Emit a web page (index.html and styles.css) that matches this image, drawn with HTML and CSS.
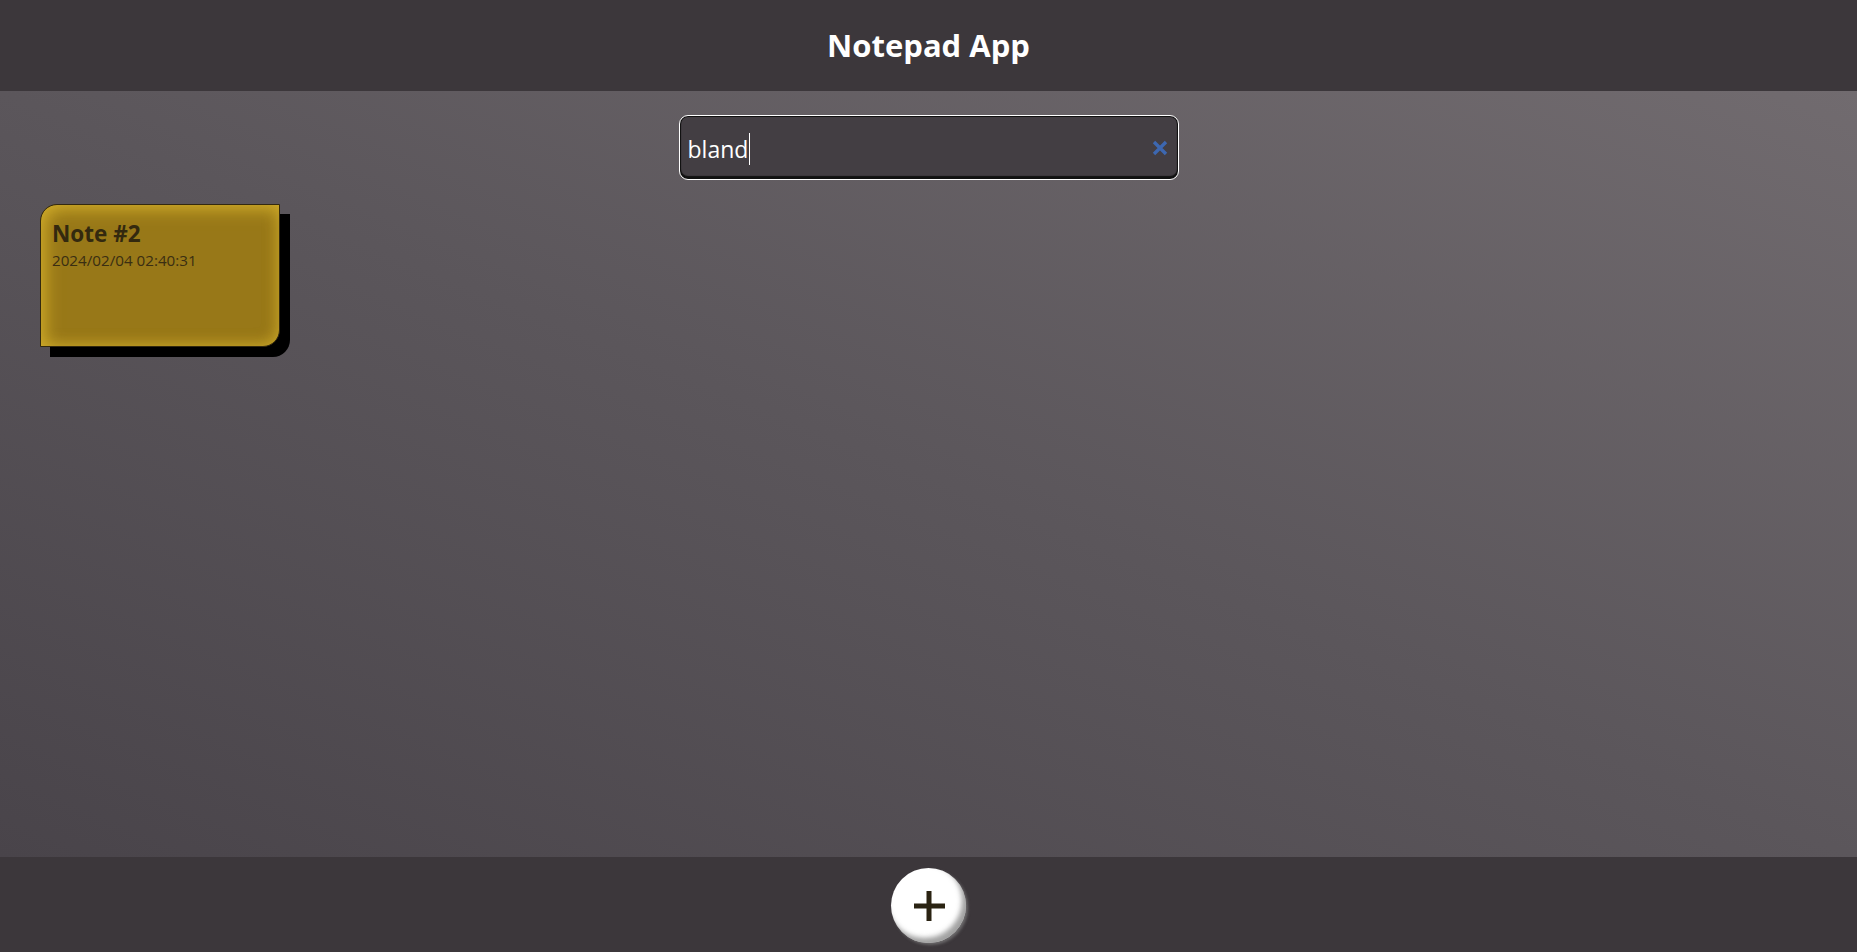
FILE: index.html
```html
<!DOCTYPE html>
<html lang="en">
<head>
<meta charset="utf-8">
<title>Notepad App</title>
<link rel="stylesheet" href="styles.css">
</head>
<body>
<div class="app">
  <header class="header">
    <h1 class="title">Notepad App</h1>
  </header>
  <main class="main">
    <div class="search-row">
      <div class="search">
        <span class="search-text">bland</span><span class="caret"></span>
        <svg class="clear" width="16" height="16" viewBox="0 0 16 16" aria-hidden="true">
          <path d="M2 2 L14 14 M14 2 L2 14" stroke="#3d67b0" stroke-width="3.4" stroke-linecap="butt" fill="none"/>
        </svg>
      </div>
    </div>
    <div class="notes">
      <div class="note">
        <div class="note-title">Note #2</div>
        <div class="note-date">2024/02/04 02:40:31</div>
      </div>
    </div>
  </main>
  <footer class="footer">
    <button class="add" type="button" aria-label="Add note">
      <svg width="32" height="32" viewBox="0 0 32 32" aria-hidden="true">
        <path d="M16 1 V31 M1 16 H32" stroke="#2a2312" stroke-width="5" fill="none"/>
      </svg>
    </button>
  </footer>
</div>
</body>
</html>
```
FILE: styles.css
```css
html, body {
  margin: 0;
  padding: 0;
  height: 100%;
}
body {
  font-family: "Open Sans", "Noto Sans", sans-serif;
  background: #3c373b;
}
.app {
  display: flex;
  flex-direction: column;
  height: 100vh;
}
.header {
  height: 91px;
  flex: 0 0 91px;
  background: #3c373b;
  display: flex;
  align-items: center;
  justify-content: center;
}
.title {
  margin: 0;
  color: #ffffff;
  font-size: 31px;
  font-weight: 700;
  line-height: 1;
  padding-bottom: 1px;
}
.main {
  flex: 1 1 auto;
  background: linear-gradient(to top right, #49444a 0%, #5b565b 50%, #716b6f 100%);
  padding: 24px 40px 0 40px;
  display: flex;
  flex-direction: column;
  gap: 24px;
}
.search-row {
  display: flex;
  justify-content: center;
}
.search {
  width: 500px;
  height: 65px;
  box-sizing: border-box;
  border: 1px solid #ffffff;
  border-radius: 9px;
  background: #433e43;
  box-shadow: inset 0 0 0 1px #111, inset 0 -2px 1px 1px #111;
  display: flex;
  align-items: center;
  padding: 0 10px 0 8px;
}
.search-text {
  color: #ffffff;
  font-size: 23px;
  line-height: 1;
  padding-top: 4px;
}
.caret {
  display: inline-block;
  width: 1px;
  height: 32px;
  background: #ffffff;
  margin-left: 1px;
  margin-top: 2px;
}
.clear {
  margin-left: auto;
  margin-top: 1px;
}
.notes {
  display: flex;
  flex-wrap: wrap;
  gap: 24px;
}
.note {
  width: 240px;
  height: 143px;
  box-sizing: border-box;
  border: 1px solid #33290f;
  border-radius: 17px 0 17px 0;
  background: #987818;
  box-shadow: inset 4px 4px 18px rgba(214, 178, 44, 0.85), inset -2px -2px 14px rgba(200, 165, 40, 0.6), 10px 10px 0 #000;
  padding: 15px 12px 11px 11px;
  color: #33290f;
}
.note-title {
  font-size: 22.5px;
  font-weight: 700;
  line-height: 28px;
}
.note-date {
  font-size: 15.2px;
  line-height: 20px;
  margin-top: 2px;
  color: #3a2e12;
}
.footer {
  flex: 0 0 95px;
  height: 95px;
  background: #3c373b;
  display: flex;
  justify-content: center;
  padding-top: 11px;
  box-sizing: border-box;
}
.add {
  width: 75px;
  height: 75px;
  border-radius: 50%;
  border: none;
  background: #ffffff;
  box-shadow: inset -4px -5px 5px rgba(110, 110, 110, 0.65), 2px 2px 3px rgba(140,140,140,0.6);
  display: flex;
  align-items: center;
  justify-content: center;
  padding: 0;
  cursor: pointer;
}
```
